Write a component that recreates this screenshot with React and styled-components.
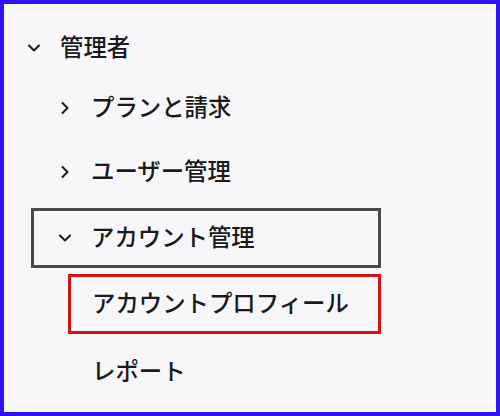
import React from "react";
import styled, { createGlobalStyle } from "styled-components";

const Global = createGlobalStyle`
  html, body { margin: 0; padding: 0; background: #f7f7fa; }
  * { box-sizing: border-box; }
`;

const Frame = styled.div`
  width: 500px;
  height: 416px;
  border: 4px solid #2d12f2;
  background: #f7f7fa;
  font-family: "Noto Sans CJK JP", "Noto Sans", sans-serif;
  color: #1a1a1a;
  overflow: hidden;
`;

const Tree = styled.ul`
  list-style: none;
  margin: 0;
  padding: 14px 115px 0 0;
  display: flex;
  flex-direction: column;
`;

const borderColors = {
  none: "transparent",
  focus: "#4a4a4a",
  selected: "#d41515",
};

const Row = styled.li`
  display: flex;
  align-items: center;
  gap: 16px;
  height: 60px;
  margin-top: ${(p) => p.$gap || 0}px;
  margin-left: ${(p) => p.$indent}px;
  padding-left: ${(p) => p.$inset}px;
  border: 3px solid ${(p) => borderColors[p.$mark || "none"]};
  font-size: 23.4px;
  font-weight: 500;
  line-height: 1;
  white-space: nowrap;
`;

const Label = styled.span`
  display: block;
  padding-bottom: 2px;
`;

const Chevron = ({ open }) => (
  <svg
    width="20"
    height="20"
    viewBox="0 0 24 24"
    fill="none"
    stroke="#1a1a1a"
    strokeWidth="2.4"
    strokeLinecap="round"
    strokeLinejoin="round"
    style={{ flex: "none" }}
  >
    {open ? <path d="m6 9 6 6 6-6" /> : <path d="m9 18 6-6-6-6" />}
  </svg>
);

const items = [
  { label: "管理者", indent: 0, inset: 17, gap: 0, icon: "open" },
  { label: "プランと請求", indent: 27, inset: 21, gap: 0, icon: "closed" },
  { label: "ユーザー管理", indent: 27, inset: 21, gap: 4, icon: "closed" },
  { label: "アカウント管理", indent: 27, inset: 21, gap: 6, icon: "open", mark: "focus" },
  { label: "アカウントプロフィール", indent: 64, inset: 21, gap: 6, mark: "selected" },
  { label: "レポート", indent: 64, inset: 21, gap: 8 },
];

export default function App() {
  return (
    <>
      <Global />
      <Frame>
        <Tree role="tree">
          {items.map((it) => (
            <Row
              key={it.label}
              role="treeitem"
              $indent={it.indent}
              $inset={it.inset}
              $gap={it.gap}
              $mark={it.mark}
            >
              {it.icon && <Chevron open={it.icon === "open"} />}
              <Label>{it.label}</Label>
            </Row>
          ))}
        </Tree>
      </Frame>
    </>
  );
}
